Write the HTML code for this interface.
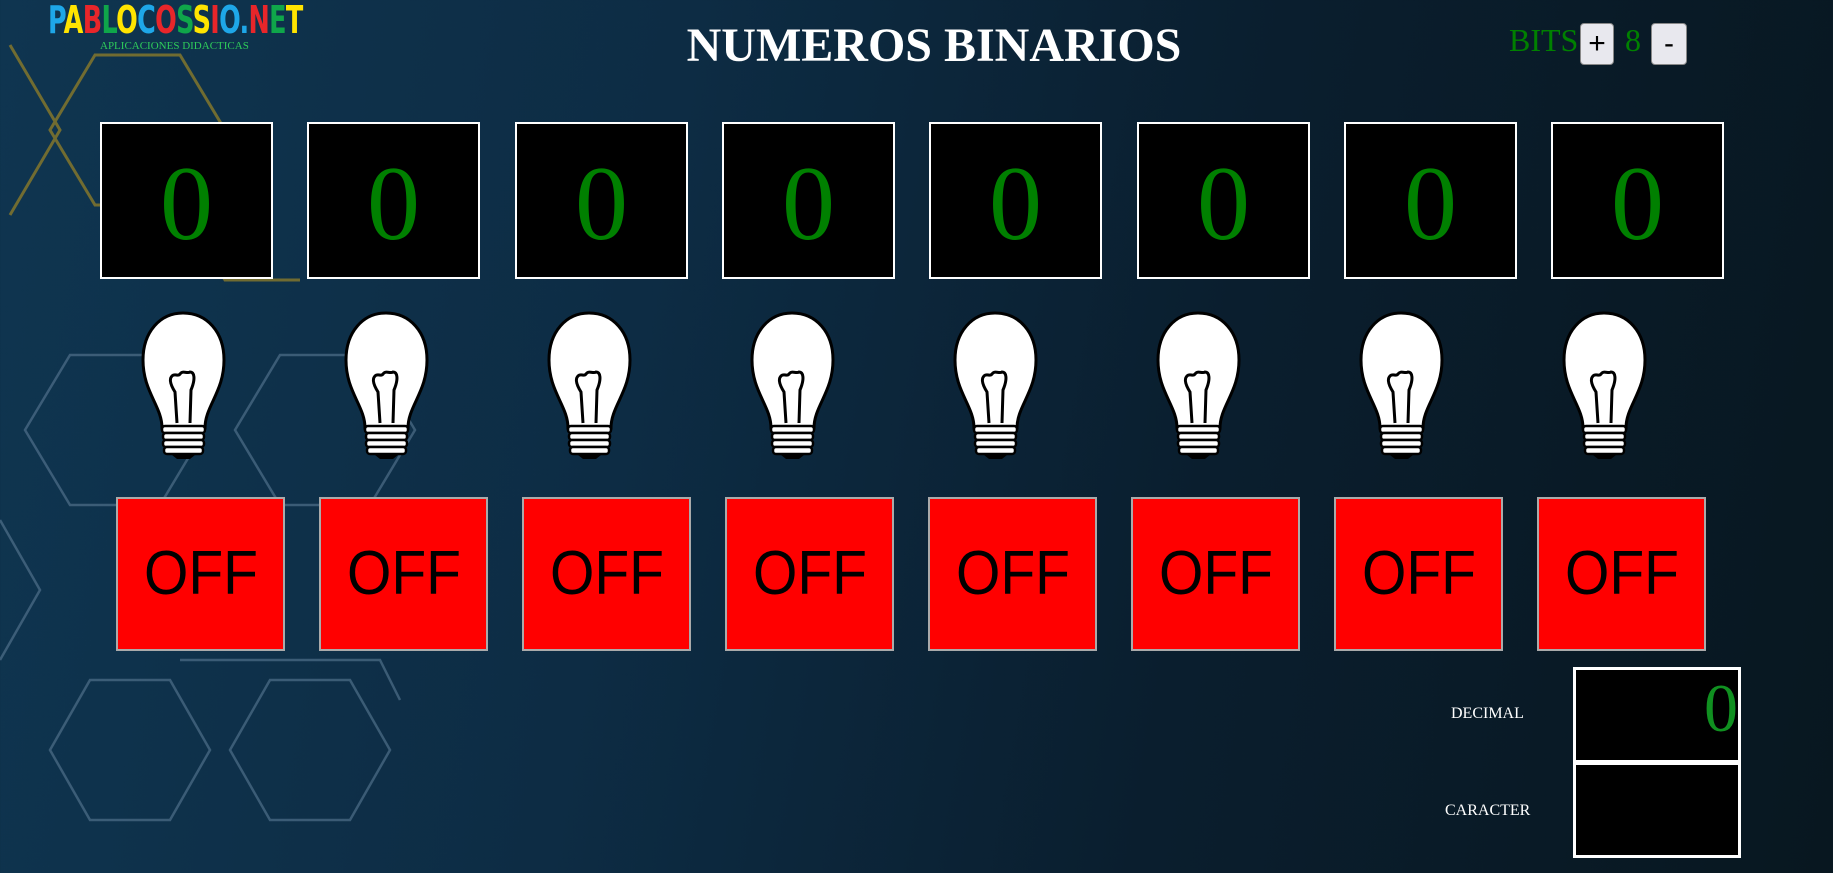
<!DOCTYPE html>
<html><head><meta charset="utf-8"><style>
html,body{margin:0;padding:0;width:1833px;height:873px;overflow:hidden}
body{position:relative;background:linear-gradient(100deg,#0f3550 0%,#0d2c44 35%,#0a1e2e 65%,#081720 100%);font-family:"Liberation Serif",serif}
.abs{position:absolute}
.box{position:absolute;top:122px;width:169px;height:153px;background:#000;border:2px solid #fff;color:#008000;font-size:106px;text-align:center;line-height:160px}
.btn{position:absolute;top:497px;width:165px;height:150px;background:#f00;border:2px solid #aaa;color:#000;font-family:"Liberation Sans",sans-serif;font-size:62px;text-align:center;line-height:150px}
.btn span{display:inline-block;transform:scaleX(.92)}
.bulb{position:absolute;top:310px;width:87px;height:155px}
.sb{position:absolute;top:23px;height:42px;width:34px;background:#e8e8ee;border:1px solid #888;border-radius:4px;font-family:"Liberation Sans",sans-serif;font-size:30px;text-align:center;line-height:40px;color:#000;box-sizing:border-box}
</style></head><body>
<svg class="abs" style="left:0;top:0" width="450" height="873">
<g fill="none" stroke="#8a7a2a" stroke-width="3" opacity=".8">
<path d="M95,55 L180,55 L225,130 L180,205 L95,205 L50,130 Z"/>
<path d="M10,215 L60,130 L10,45"/>
<path d="M180,205 L225,280 L300,280"/>
</g>
<g fill="none" stroke="#5a7a94" stroke-width="2.5" opacity=".6">
<path d="M70,355 L160,355 L205,430 L160,505 L70,505 L25,430 Z"/>
<path d="M280,355 L370,355 L415,430 L370,505 L280,505 L235,430 Z"/>
<path d="M90,680 L170,680 L210,750 L170,820 L90,820 L50,750 Z"/>
<path d="M270,680 L350,680 L390,750 L350,820 L270,820 L230,750 Z"/>
<path d="M0,520 L40,590 L0,660"/>
<path d="M180,660 L380,660 L400,700"/>
</g></svg>
<div class="abs" style="left:48px;top:-2px;font-family:'DejaVu Sans',sans-serif;font-weight:bold;font-size:38px;letter-spacing:-1px;line-height:44px;transform:scaleX(.67);transform-origin:0 0;white-space:nowrap">
<span style="color:#1ea7e8">P</span><span style="color:#ffe400">A</span><span style="color:#e8262a">B</span><span style="color:#0fa64a">L</span><span style="color:#ffe400">O</span><span style="color:#1ea7e8">C</span><span style="color:#e8262a">O</span><span style="color:#0fa64a">S</span><span style="color:#ffe400">S</span><span style="color:#e8262a">I</span><span style="color:#1ea7e8">O</span><span style="color:#1ea7e8">.</span><span style="color:#e8262a">N</span><span style="color:#0fa64a">E</span><span style="color:#ffe400">T</span></div>
<div class="abs" style="left:100px;top:40px;color:#2ecc5a;font-size:11px">APLICACIONES DIDACTICAS</div>
<div class="abs" style="left:0;width:1868px;top:18px;text-align:center;color:#fff;font-weight:bold;font-size:48px">NUMEROS BINARIOS</div>
<div class="abs" style="left:1509px;top:22px;color:#008000;font-size:32px">BITS</div>
<div class="sb" style="left:1580px">+</div>
<div class="abs" style="left:1625px;top:22px;color:#008000;font-size:32px">8</div>
<div class="sb" style="left:1651px;width:36px">-</div>

<div class="box" style="left:100px">0</div>
<div class="box" style="left:307px">0</div>
<div class="box" style="left:515px">0</div>
<div class="box" style="left:722px">0</div>
<div class="box" style="left:929px">0</div>
<div class="box" style="left:1137px">0</div>
<div class="box" style="left:1344px">0</div>
<div class="box" style="left:1551px">0</div>

<svg width="0" height="0" style="position:absolute"><defs>
<g id="b">
<path d="M22,118 C22,96 3,82 3,50 C3,22 20,3 43,3 C67,3 84,22 84,50 C84,82 65,96 65,118 Z" fill="#fff" stroke="#000" stroke-width="3"/>
<path d="M37,113 L35,82 C30,74 29,69 32,66 C35,63 38,67 40,64 C43,60 47,64 50,62 C54,62 56,68 51,80 L50,113" fill="none" stroke="#000" stroke-width="3"/>
<rect x="22" y="116" width="43" height="7" rx="3" fill="#fff" stroke="#000" stroke-width="2.5"/>
<rect x="23" y="123" width="41" height="7" rx="3" fill="#fff" stroke="#000" stroke-width="2.5"/>
<rect x="23" y="130" width="41" height="7" rx="3" fill="#fff" stroke="#000" stroke-width="2.5"/>
<rect x="24" y="137" width="39" height="7" rx="3" fill="#fff" stroke="#000" stroke-width="2.5"/>
<path d="M32,145 L55,145 L50,149 L37,149 Z" fill="#000"/>
</g></defs></svg>
<svg class="bulb" style="left:140px" viewBox="0 0 87 155"><use href="#b"/></svg>
<svg class="bulb" style="left:343px" viewBox="0 0 87 155"><use href="#b"/></svg>
<svg class="bulb" style="left:546px" viewBox="0 0 87 155"><use href="#b"/></svg>
<svg class="bulb" style="left:749px" viewBox="0 0 87 155"><use href="#b"/></svg>
<svg class="bulb" style="left:952px" viewBox="0 0 87 155"><use href="#b"/></svg>
<svg class="bulb" style="left:1155px" viewBox="0 0 87 155"><use href="#b"/></svg>
<svg class="bulb" style="left:1358px" viewBox="0 0 87 155"><use href="#b"/></svg>
<svg class="bulb" style="left:1561px" viewBox="0 0 87 155"><use href="#b"/></svg>

<div class="btn" style="left:116px"><span>OFF</span></div>
<div class="btn" style="left:319px"><span>OFF</span></div>
<div class="btn" style="left:522px"><span>OFF</span></div>
<div class="btn" style="left:725px"><span>OFF</span></div>
<div class="btn" style="left:928px"><span>OFF</span></div>
<div class="btn" style="left:1131px"><span>OFF</span></div>
<div class="btn" style="left:1334px"><span>OFF</span></div>
<div class="btn" style="left:1537px"><span>OFF</span></div>

<div class="abs" style="left:1451px;top:705px;color:#fff;font-size:16px">DECIMAL</div>
<div class="abs" style="left:1445px;top:802px;color:#fff;font-size:16px">CARACTER</div>
<div class="abs" style="left:1573px;top:667px;width:162px;height:90px;background:#000;border:3px solid #fff;color:#109020;font-size:68px;text-align:right;line-height:76px">0</div>
<div class="abs" style="left:1573px;top:762px;width:162px;height:90px;background:#000;border:3px solid #fff"></div>
</body></html>
